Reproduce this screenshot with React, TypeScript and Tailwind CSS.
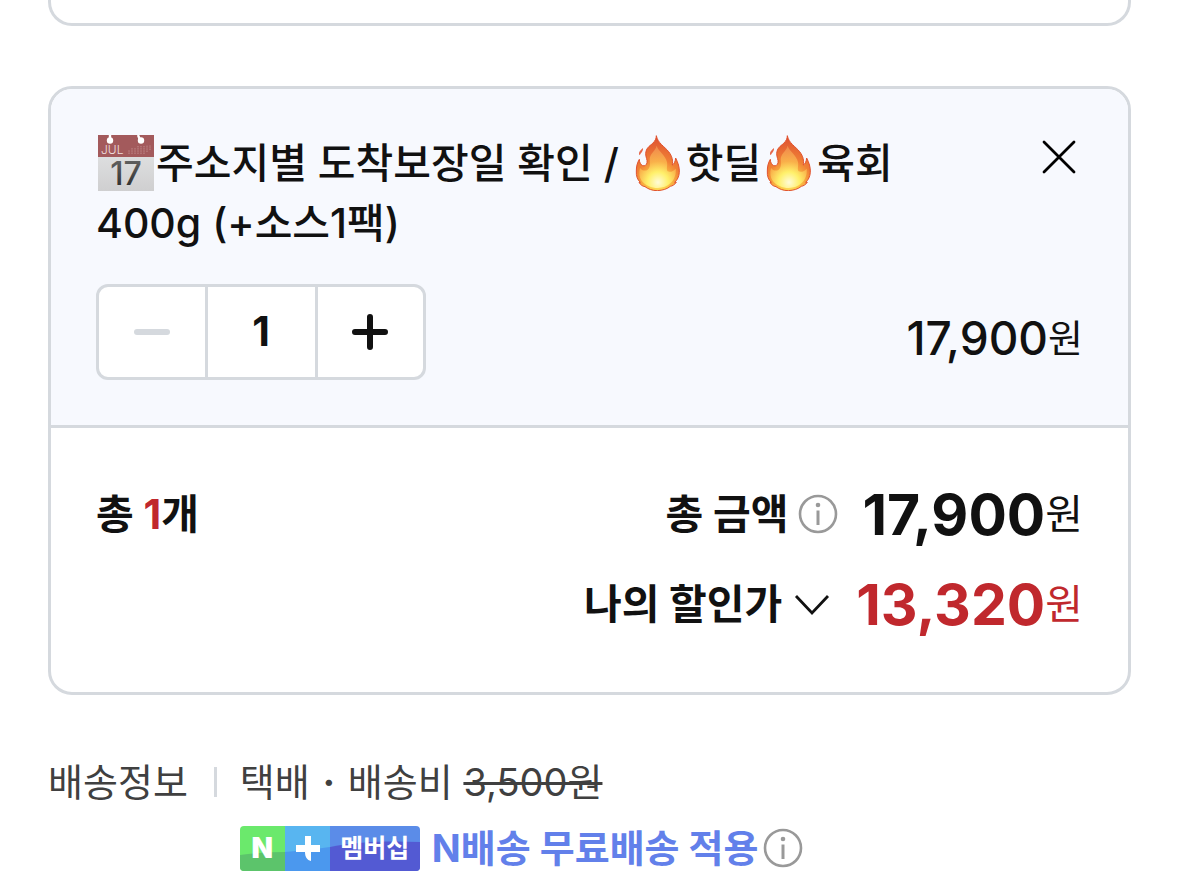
import { useState } from "react";

const FONT = "font-['Inter','Noto_Sans_CJK_KR',sans-serif]";

const CalendarEmoji = () => (
  <svg viewBox="0 0 56 56" className="-mt-2 mr-0.5 ml-0.5 inline-block size-14 align-middle" aria-hidden="true">
    <defs>
      <linearGradient id="calPage" x1="0" y1="0" x2="0" y2="1">
        <stop offset="0" stopColor="#dedfe0" />
        <stop offset="1" stopColor="#cfcfd0" />
      </linearGradient>
      <linearGradient id="calDay" x1="0" y1="0" x2="0" y2="1">
        <stop offset="0" stopColor="#6c6c6c" />
        <stop offset="1" stopColor="#242424" />
      </linearGradient>
    </defs>
    <rect x="0" y="20" width="56" height="36" fill="url(#calPage)" />
    <rect x="0" y="0" width="56" height="22" fill="#a35a5c" />
    <path d="M12 0v5M40 0l2 5" stroke="#fff" strokeWidth="2.4" />
    <circle cx="12" cy="5.5" r="3.2" fill="#fff" />
    <circle cx="43" cy="5.5" r="3.2" fill="#fff" />
    <path d="M31 19v-4M34 19v-6M37 19v-6M40 19v-8M43 19v-8M46 19v-8M49 17v-7M52 15v-5" stroke="#c08a8b" strokeWidth="1" strokeDasharray="1.5 0.7" />
    <text x="3" y="19" fontSize="12" fontFamily="Inter, sans-serif" fontWeight="300" fill="#eedede">JUL</text>
    <text x="28" y="50" fontSize="32" textAnchor="middle" fontFamily="Inter, sans-serif" fill="url(#calDay)">17</text>
  </svg>
);

const FireEmoji = () => (
  <svg viewBox="0 0 168 168" className="-mt-2 inline-block size-14 align-middle" aria-hidden="true">
    <defs>
      <radialGradient id="fireOuter" cx="84" cy="142" r="138" gradientUnits="userSpaceOnUse">
        <stop offset="0" stopColor="#fff36a" />
        <stop offset="0.25" stopColor="#fbc044" />
        <stop offset="0.5" stopColor="#f08035" />
        <stop offset="1" stopColor="#dd4f32" />
      </radialGradient>
      <radialGradient id="fireMid" cx="84" cy="142" r="105" gradientUnits="userSpaceOnUse">
        <stop offset="0" stopColor="#fffbd8" />
        <stop offset="0.3" stopColor="#fff06a" />
        <stop offset="0.6" stopColor="#f9b04a" />
        <stop offset="1" stopColor="#f08a4c" />
      </radialGradient>
    </defs>
    <path
      d="M79 2C83 24 103 34 116 50C127 64 129 77 127 90C132 88 136 80 137 69C144 83 149 97 148 112C147 124 143 134 134 142L139 142C134 149 127 153 121 154C112 162 98 166 82 167C67 167 54 162 45 155C37 154 31 149 27 142L31 142C22 134 18 123 19 108C19 96 21 84 28 73C28 82 32 89 38 92C44 94 50 90 51 83C53 74 47 68 47 56C48 39 58 34 68 25C75 18 79 11 79 2Z"
      fill="url(#fireOuter)"
      stroke="#e0522f"
      strokeWidth="3"
      strokeLinejoin="round"
    />
    <path
      d="M80 32C84 48 108 62 111 82C113 95 108 103 113 109C121 113 131 108 137 101C139 118 133 134 121 145C112 154 98 159 83 159C65 159 44 150 35 137C28 127 26 114 30 99C36 107 45 109 53 104C62 97 60 85 59 73C59 56 76 49 80 32Z"
      fill="url(#fireMid)"
    />
    <path d="M39 39C40 49 33 53 29 61C24 54 29 47 39 39Z" fill="#e5684c" />
  </svg>
);

const InfoIcon = () => (
  <svg viewBox="0 0 40 40" className="size-10" fill="none" aria-hidden="true">
    <circle cx="20" cy="20" r="18" stroke="#999" strokeWidth="2.6" />
    <circle cx="20" cy="11" r="2.3" fill="#999" />
    <path d="M20 16.5V31" stroke="#999" strokeWidth="3" />
  </svg>
);

const MembershipBadge = () => (
  <span className="relative flex h-[45px] w-[180px] shrink-0 items-center overflow-hidden rounded text-white">
    <svg viewBox="0 0 180 45" className="absolute inset-0 size-full" aria-hidden="true">
      <path d="M0 0H45V45H0Z" fill="#6be96c" />
      <path d="M0 29C15 27 30 26 45 26V45H0Z" fill="#5cc46b" />
      <path d="M45 0H90V45H45Z" fill="#58b5f0" />
      <path d="M45 26C60 25 75 23 90 21V45H45Z" fill="#4b98ee" />
      <path d="M90 0H180V45H90Z" fill="#5b8ce8" />
      <path d="M90 21C120 15 150 15 180 16V45H90Z" fill="#535ad3" />
      <path d="M65 10H71V19H80V26H71V35C67 34 65 31 65 26H56V19H65Z" fill="#fff" />
    </svg>
    <span className="relative w-[45px] text-center text-[28px] leading-none font-black">N</span>
    <span className="relative ml-[45px] w-[90px] text-center text-[25px] leading-none font-bold">멤버십</span>
  </span>
);

export default function App() {
  const [count, setCount] = useState(1);

  return (
    <main className={`${FONT} bg-white px-12 text-[#111]`}>
      <section className="h-[26px] rounded-b-3xl border-3 border-t-0 border-[#d5d9de]" />

      <section className="mt-[60px] overflow-hidden rounded-3xl border-3 border-[#d5d9de]">
        <div className="border-b-3 border-[#d5d9de] bg-[#f7f9fe] px-[45px] pt-11 pb-[45px]">
          <div className="flex items-start justify-between gap-8">
            <h2 className="flex-1 text-[41px] leading-[60px] font-medium break-keep">
              <CalendarEmoji />
              주소지별 도착보장일 확인 / <FireEmoji />
              핫딜
              <FireEmoji />
              육회 400g (+소스1팩)
            </h2>
            <button type="button" aria-label="삭제" className="flex size-12 items-center justify-center">
              <svg viewBox="0 0 48 48" className="size-12" stroke="#000" strokeWidth="2.8" strokeLinecap="round">
                <path d="M9 9L39 39M39 9L9 39" />
              </svg>
            </button>
          </div>

          <div className="mt-[31px] flex items-center justify-between">
            <div className="flex h-24 w-[330px] overflow-hidden rounded-xl border-3 border-[#d5d9de] bg-white">
              <button
                type="button"
                aria-label="수량 빼기"
                disabled={count === 1}
                onClick={() => setCount(count - 1)}
                className="flex flex-1 items-center justify-center text-black disabled:text-[#d5d9de]"
              >
                <svg viewBox="0 0 40 40" className="size-10" stroke="currentColor" strokeWidth="6" strokeLinecap="round">
                  <path d="M5 20H35" />
                </svg>
              </button>
              <input
                type="text"
                aria-label="수량"
                value={count}
                onChange={(e) => setCount(Number(e.target.value) || 1)}
                className="w-[113px] border-x-3 border-[#d5d9de] text-center text-[41px] font-bold"
              />
              <button
                type="button"
                aria-label="수량 더하기"
                onClick={() => setCount(count + 1)}
                className="flex flex-1 items-center justify-center"
              >
                <svg viewBox="0 0 40 40" className="size-10" stroke="currentColor" strokeWidth="6" strokeLinecap="round">
                  <path d="M5 20H35M20 5V35" />
                </svg>
              </button>
            </div>
            <p className="flex items-center pt-3 text-[46px] leading-none font-medium">
              17,900<span className="text-[38px] font-normal">원</span>
            </p>
          </div>
        </div>

        <div className="flex items-start justify-between px-[45px] pt-14 pb-[58px] text-[41px] leading-[60px] font-bold">
          <p>
            총 <span className="text-[#c0282d]">1</span>개
          </p>
          <div className="flex flex-col items-end gap-[30px]">
            <div className="flex items-center">
              <span>총 금액</span>
              <button type="button" aria-label="총 금액 안내" className="mr-6 ml-[10px]">
                <InfoIcon />
              </button>
              <span className="flex items-center text-[57px] leading-none">
                17,900<span className="text-[41px] font-normal">원</span>
              </span>
            </div>
            <div className="flex items-center">
              <button type="button" className="mr-6 flex items-center gap-[10px]">
                나의 할인가
                <svg viewBox="0 0 40 40" className="size-10" fill="none" stroke="#111" strokeWidth="2.8">
                  <path d="M4 12L20 29L36 12" />
                </svg>
              </button>
              <span className="flex items-center text-[57px] leading-none text-[#c0282d]">
                13,320<span className="text-[41px] font-normal">원</span>
              </span>
            </div>
          </div>
        </div>
      </section>

      <dl className="mt-[57px] flex text-[38px] leading-[60px] text-[#404040]">
        <dt className="flex items-center self-start">
          배송정보
          <span className="mr-[23px] ml-[26px] h-[30px] w-[3px] bg-[#d5d9de]" />
        </dt>
        <dd>
          <p>
            택배 <span className="mx-[2px] font-bold">·</span> 배송비 <del>3,500원</del>
          </p>
          <p className="mt-[6px] flex items-center font-bold text-[#6280ea]">
            <MembershipBadge />
            <span className="ml-3">N배송 무료배송 적용</span>
            <button type="button" aria-label="배송 혜택 안내" className="ml-1">
              <InfoIcon />
            </button>
          </p>
        </dd>
      </dl>
    </main>
  );
}
